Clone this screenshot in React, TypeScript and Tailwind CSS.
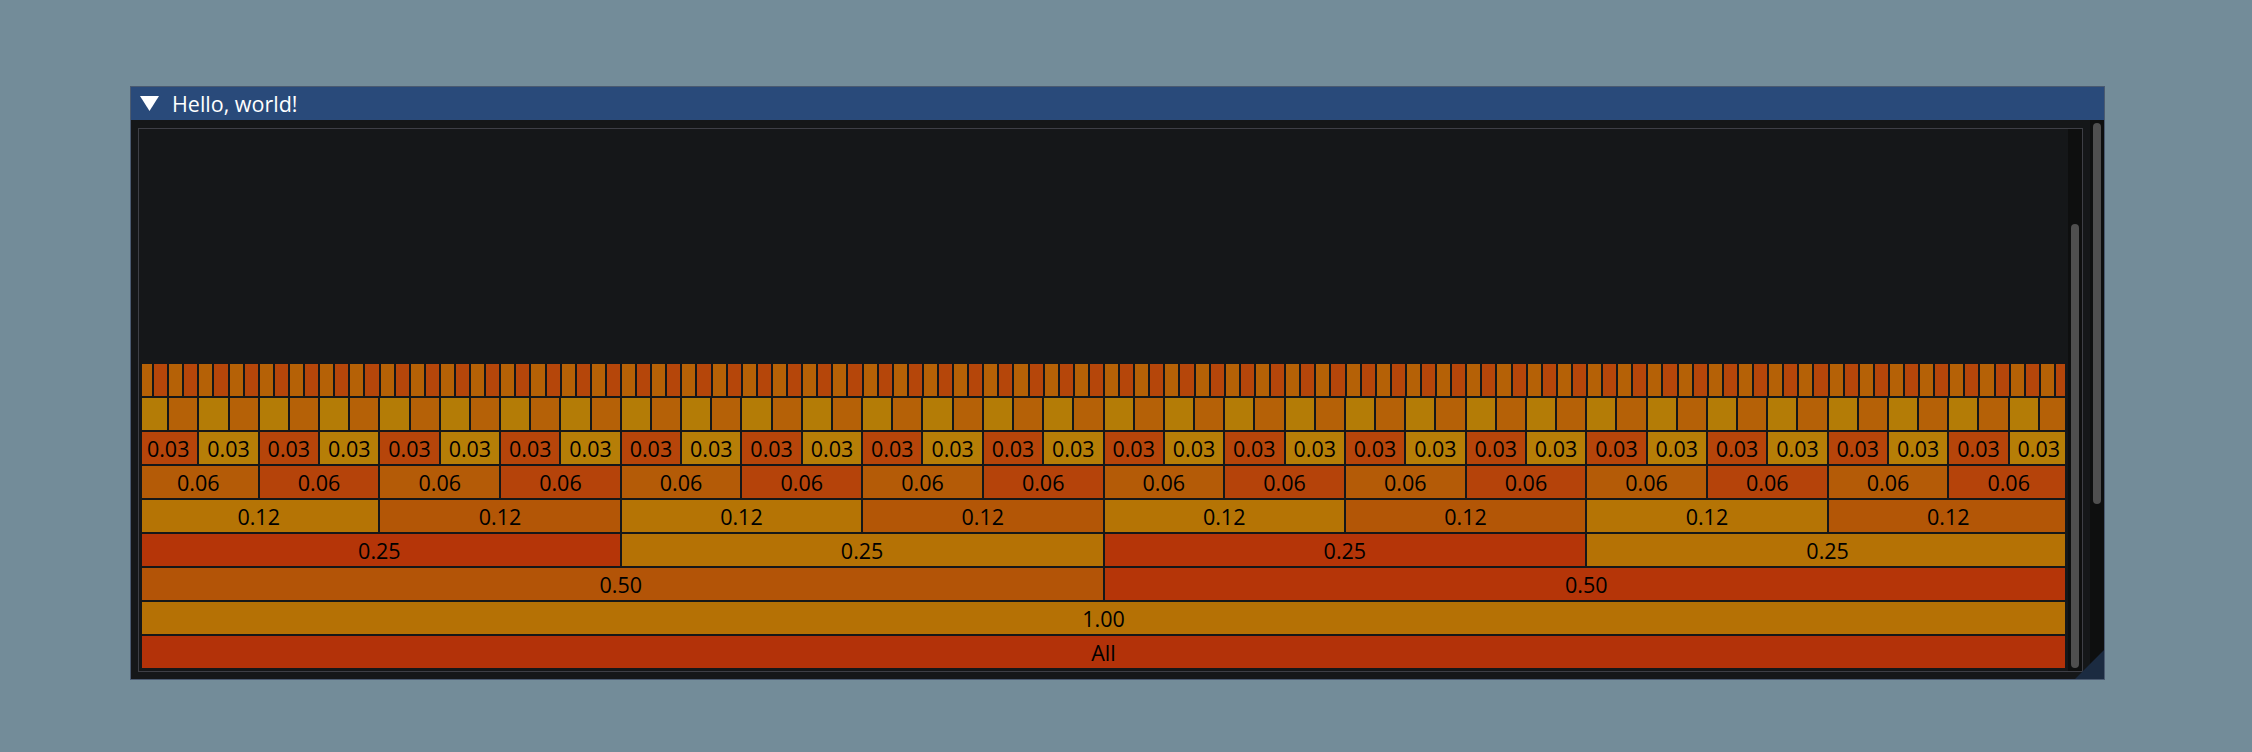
const rows = [
  { n: 128, label: '', a: 'bg-[#b56106]', b: 'bg-[#b5460a]' },
  { n: 64, label: '', a: 'bg-[#b47c06]', b: 'bg-[#b56107]' },
  { n: 32, label: '0.03', a: 'bg-[#b6450a]', b: 'bg-[#b67e07]' },
  { n: 16, label: '0.06', a: 'bg-[#b45b07]', b: 'bg-[#b5430a]' },
  { n: 8, label: '0.12', a: 'bg-[#b57405]', b: 'bg-[#b35606]' },
  { n: 4, label: '0.25', a: 'bg-[#b53508]', b: 'bg-[#b57205]' },
  { n: 2, label: '0.50', a: 'bg-[#b35407]', b: 'bg-[#b53508]' },
  { n: 1, label: '1.00', a: 'bg-[#b57105]', b: 'bg-[#b57105]' },
  { n: 1, label: 'All', a: 'bg-[#b33209]', b: 'bg-[#b33209]' },
];

function FlameRow({ n, label, a, b }: { n: number; label: string; a: string; b: string }) {
  return (
    <div className="flex gap-[2px] h-[32px]">
      {Array.from({ length: n }, (_, i) => (
        <div
          key={i}
          className={`flex-1 min-w-0 flex items-center justify-center pt-[1px] overflow-hidden whitespace-nowrap text-black text-[21.5px] leading-none ${i % 2 === 0 ? a : b}`}
        >
          {label}
        </div>
      ))}
    </div>
  );
}

export default function App() {
  return (
    <div className="w-[2252px] h-[752px] bg-[#738c99] pl-[130px] pt-[86px] font-['Open_Sans',sans-serif]">
      {/* window */}
      <div className="relative w-[1975px] h-[594px] border border-[#4a5a70] bg-[#151719] flex flex-col">
        {/* title bar */}
        <div className="h-[33px] bg-[#294a7a] flex items-center pl-[9px] gap-[13px]">
          <svg width="19" height="15" viewBox="0 0 19 15">
            <polygon points="0,0 19,0 9.5,15" fill="#ffffff" />
          </svg>
          <span className="text-white text-[21.5px] leading-none">Hello, world!</span>
        </div>

        {/* body */}
        <div className="flex flex-1">
          {/* child region */}
          <div className="ml-[7px] mt-[8px] w-[1945px] h-[544px] border border-[#3e3f46] flex">
            <div className="flex-1 px-[3px] pb-[3px] flex flex-col justify-end">
              <div className="overflow-hidden">
                <div className="mx-[-3px] flex flex-col gap-[2px]">
                  {rows.map((r, i) => (
                    <FlameRow key={i} {...r} />
                  ))}
                </div>
              </div>
            </div>
            {/* child scrollbar */}
            <div className="w-[14px] bg-[#0e0f0f] flex flex-col">
              <div className="mt-[95px] mx-[3px] w-[8px] h-[444px] rounded-full bg-[#4f4f4f]" />
            </div>
          </div>

          {/* window scrollbar */}
          <div className="ml-[7px] w-[14px] bg-[#0e0f0f] flex flex-col">
            <div className="mt-[3px] mx-[3px] w-[8px] h-[381px] rounded-full bg-[#4f4f4f]" />
          </div>
        </div>

        {/* resize grip */}
        <svg className="absolute right-0 bottom-0" width="29" height="29" viewBox="0 0 29 29">
          <polygon points="29,0 29,29 0,29" fill="#1b2b41" />
        </svg>
      </div>
    </div>
  );
}
